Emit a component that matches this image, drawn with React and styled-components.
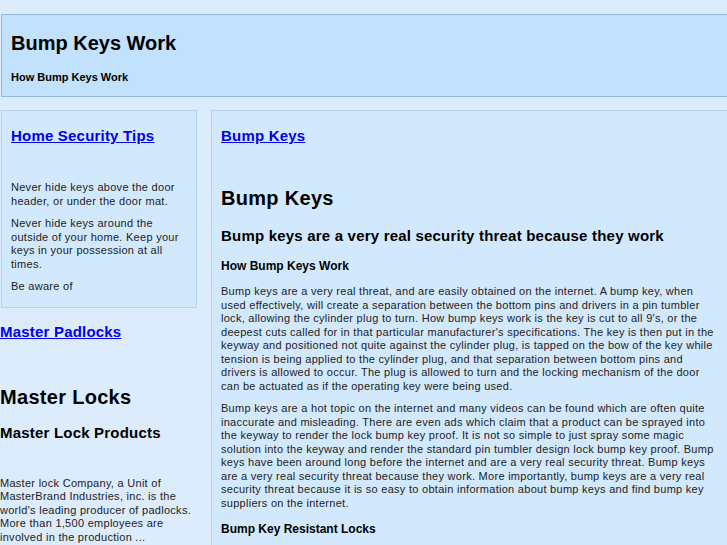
import React from "react";
import styled, { createGlobalStyle } from "styled-components";

const G = createGlobalStyle`
  html,body{margin:0;padding:0;background:#dcecfd;font-family:"Liberation Sans",Arial,sans-serif;color:#000;overflow:hidden;}
  a{color:#0000ee;}
`;
const Page = styled.div`padding-top:14px;width:727px;`;
const Header = styled.div`
  margin-left:1px;background:#c2e1fd;border:1px solid #8fbbe3;border-right:none;
  height:83px;padding:0 9px;box-sizing:border-box;
`;
const Title = styled.h1`font-size:20px;margin:16px 0 0;line-height:24px;`;
const Sub = styled.div`font-size:11px;font-weight:bold;margin-top:16px;`;
const Cols = styled.div`display:flex;gap:14px;margin-top:13px;align-items:flex-start;`;
const Left = styled.div`width:197px;flex:none;`;
const Box = styled.div`
  margin-left:1px;background:#d2e9fd;border:1px solid #b7d4ee;padding:16px 9px 13px;
`;
const LinkH = styled.a`display:block;font-size:15px;font-weight:bold;line-height:18px;letter-spacing:0.2px;`;
const P = styled.p`font-size:11px;line-height:13.5px;letter-spacing:0.28px;margin:${p=>p.$m||"0 0 9px"};color:#222;`;
const Main = styled.div`
  flex:1;background:#d2e9fd;border:1px solid #b7d4ee;border-right:none;padding:16px 9px 0;height:500px;
`;
const H1 = styled.h1`font-size:20px;margin:${p=>p.$m||"0"};line-height:24px;letter-spacing:0.3px;`;
const H2 = styled.h2`font-size:15px;margin:${p=>p.$m||"0"};line-height:18px;letter-spacing:0.2px;`;
const H3 = styled.h3`font-size:12px;margin:${p=>p.$m||"0"};line-height:15px;`;
const Rule = styled.hr`margin:14px 0 0 22px;border:none;border-top:1px solid #9a9a9a;`;

export default function App(){
  return <Page><G/>
    <Header><Title>Bump Keys Work</Title><Sub>How Bump Keys Work</Sub></Header>
    <Cols>
      <Left>
        <Box>
          <LinkH href="#">Home Security Tips</LinkH>
          <P $m="36px 0 9px">Never hide keys above the door header, or under the door mat.</P>
          <P>Never hide keys around the outside of your home. Keep your keys in your possession at all times.</P>
          <P $m="0">Be aware of</P>
        </Box>
        <LinkH href="#" style={{marginTop:15}}>Master Padlocks</LinkH>
        <H1 $m="44px 0 0">Master Locks</H1>
        <H2 $m="15px 0 0">Master Lock Products</H2>
        <P $m="35px 0 0">Master lock Company, a Unit of MasterBrand Industries, inc. is the world's leading producer of padlocks. More than 1,500 employees are involved in the production ...</P>
      </Left>
      <Main>
        <LinkH href="#">Bump Keys</LinkH>
        <H1 $m="41px 0 0">Bump Keys</H1>
        <H2 $m="17px 0 0">Bump keys are a very real security threat because they work</H2>
        <H3 $m="14px 0 0">How Bump Keys Work</H3>
        <P $m="11px 0 9px">Bump keys are a very real threat, and are easily obtained on the internet. A bump key, when used effectively, will create a separation between the bottom pins and drivers in a pin tumbler lock, allowing the cylinder plug to turn. How bump keys work is the key is cut to all 9's, or the deepest cuts called for in that particular manufacturer's specifications. The key is then put in the keyway and positioned not quite against the cylinder plug, is tapped on the bow of the key while tension is being applied to the cylinder plug, and that separation between bottom pins and drivers is allowed to occur. The plug is allowed to turn and the locking mechanism of the door can be actuated as if the operating key were being used.</P>
        <P>Bump keys are a hot topic on the internet and many videos can be found which are often quite inaccurate and misleading. There are even ads which claim that a product can be sprayed into the keyway to render the lock bump key proof. It is not so simple to just spray some magic solution into the keyway and render the standard pin tumbler design lock bump key proof. Bump keys have been around long before the internet and are a very real security threat. Bump keys are a very real security threat because they work. More importantly, bump keys are a very real security threat because it is so easy to obtain information about bump keys and find bump key suppliers on the internet.</P>
        <H3 $m="12px 0 0">Bump Key Resistant Locks</H3>
        <P $m="14px 0 0">With a standard pin tumbler cylinder, it is possible to make the lock much more bump <i>resistant</i> by taking some consideration in what length of bottom pins are used when pinning up the cylinder. The standard pin tumbler</P>
      </Main>
    </Cols>
    <Rule style={{width:190, marginTop:-8}}/>
  </Page>;
}
